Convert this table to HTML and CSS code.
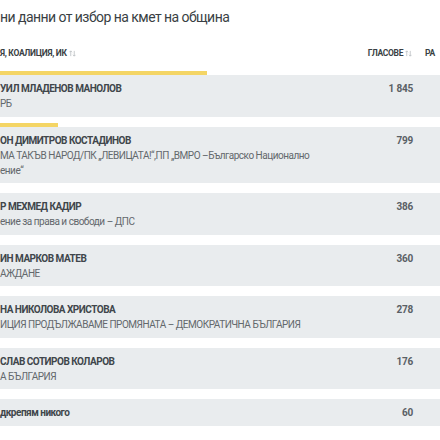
FILE: index.html
```html
<!DOCTYPE html>
<html lang="bg">
<head>
<meta charset="utf-8">
<title>Резултати</title>
<link rel="stylesheet" href="styles.css">
</head>
<body>
<div class="page">
  <h1 class="title">ни данни от избор на кмет на община</h1>
  <div class="table">
    <div class="head">
      <div class="h-name">Я, КОАЛИЦИЯ, ИК <svg class="sort" viewBox="0 0 8 8" width="7" height="7"><path d="M2 7V1M0.5 2.5L2 1L3.5 2.5M6 1v6M4.5 5.5L6 7L7.5 5.5" fill="none" stroke="#b9bdc1" stroke-width="0.9"/></svg></div>
      <div class="h-votes">ГЛАСОВЕ <svg class="sort" viewBox="0 0 8 8" width="7" height="7"><path d="M2 7V1M0.5 2.5L2 1L3.5 2.5M6 1v6M4.5 5.5L6 7L7.5 5.5" fill="none" stroke="#b9bdc1" stroke-width="0.9"/></svg></div>
      <div class="h-pct">РА</div>
    </div>

    <div class="row">
      <div class="bar" style="width:263px"></div>
      <div class="cells">
        <div class="name"><div class="cand">УИЛ МЛАДЕНОВ МАНОЛОВ</div><div class="party">РБ</div></div>
        <div class="votes">1 845</div>
        <div class="pct"></div>
      </div>
    </div>

    <div class="row">
      <div class="bar" style="width:113.9px"></div>
      <div class="cells">
        <div class="name"><div class="cand">ОН ДИМИТРОВ КОСТАДИНОВ</div><div class="party">МА ТАКЪВ НАРОД/ПК „ЛЕВИЦАТА!“,ПП „ВМРО –Българско Национално<br>ение“</div></div>
        <div class="votes">799</div>
        <div class="pct"></div>
      </div>
    </div>

    <div class="row">
      <div class="bar" style="width:55px"></div>
      <div class="cells">
        <div class="name"><div class="cand">Р МЕХМЕД КАДИР</div><div class="party">ение за права и свободи – ДПС</div></div>
        <div class="votes">386</div>
        <div class="pct"></div>
      </div>
    </div>

    <div class="row">
      <div class="bar" style="width:51.3px"></div>
      <div class="cells">
        <div class="name"><div class="cand">ИН МАРКОВ МАТЕВ</div><div class="party">АЖДАНЕ</div></div>
        <div class="votes">360</div>
        <div class="pct"></div>
      </div>
    </div>

    <div class="row">
      <div class="bar" style="width:39.6px"></div>
      <div class="cells">
        <div class="name"><div class="cand">НА НИКОЛОВА ХРИСТОВА</div><div class="party">ИЦИЯ ПРОДЪЛЖАВАМЕ ПРОМЯНАТА – ДЕМОКРАТИЧНА БЪЛГАРИЯ</div></div>
        <div class="votes">278</div>
        <div class="pct"></div>
      </div>
    </div>

    <div class="row">
      <div class="bar" style="width:25.1px"></div>
      <div class="cells">
        <div class="name"><div class="cand">СЛАВ СОТИРОВ КОЛАРОВ</div><div class="party">А БЪЛГАРИЯ</div></div>
        <div class="votes">176</div>
        <div class="pct"></div>
      </div>
    </div>

    <div class="row">
      <div class="bar" style="width:8.6px"></div>
      <div class="cells">
        <div class="name"><div class="cand">дкрепям никого</div></div>
        <div class="votes">60</div>
        <div class="pct"></div>
      </div>
    </div>
  </div>
</div>
</body>
</html>
```

FILE: styles.css
```css
html, body {
  margin: 0;
  padding: 0;
  overflow: hidden;
  background: #ffffff;
}

body {
  font-family: Roboto, "Noto Sans", "DejaVu Sans", sans-serif;
  color: #3d4247;
}

.page {
  margin-left: -56px;
  width: 580px;
}

.title {
  margin: 0;
  padding: 7px 0 0 56px;
  font-size: 14px;
  line-height: 20px;
  font-weight: 400;
  letter-spacing: -0.55px;
  color: #3a3f44;
}

.head {
  display: grid;
  grid-template-columns: 1fr 70px 111px;
  margin: 19px 0 10px;
  font-size: 8.5px;
  line-height: 15px;
  font-weight: 700;
  color: #3a3f44;
  letter-spacing: -0.3px;
}

.h-name {
  padding-left: 56px;
}

.h-votes {
  text-align: right;
  padding-right: 1px;
}

.h-pct {
  padding-left: 12px;
  white-space: nowrap;
}

.sort {
  vertical-align: -0.5px;
}

.row {
  margin-bottom: 6px;
}

.bar {
  height: 4px;
  background: #f4d565;
}

.cells {
  display: grid;
  grid-template-columns: 1fr 70px 111px;
  background: #e9ecee;
  padding: 6px 0 5.5px;
  line-height: 15px;
  font-size: 10px;
}

.name {
  padding-left: 56px;
  white-space: nowrap;
}

.cand {
  font-weight: 700;
  color: #40464b;
  letter-spacing: -0.5px;
}

.party {
  color: #63686c;
  letter-spacing: -0.48px;
}

.votes {
  text-align: right;
  font-weight: 700;
  color: #5a6065;
  letter-spacing: -0.2px;
}
```
